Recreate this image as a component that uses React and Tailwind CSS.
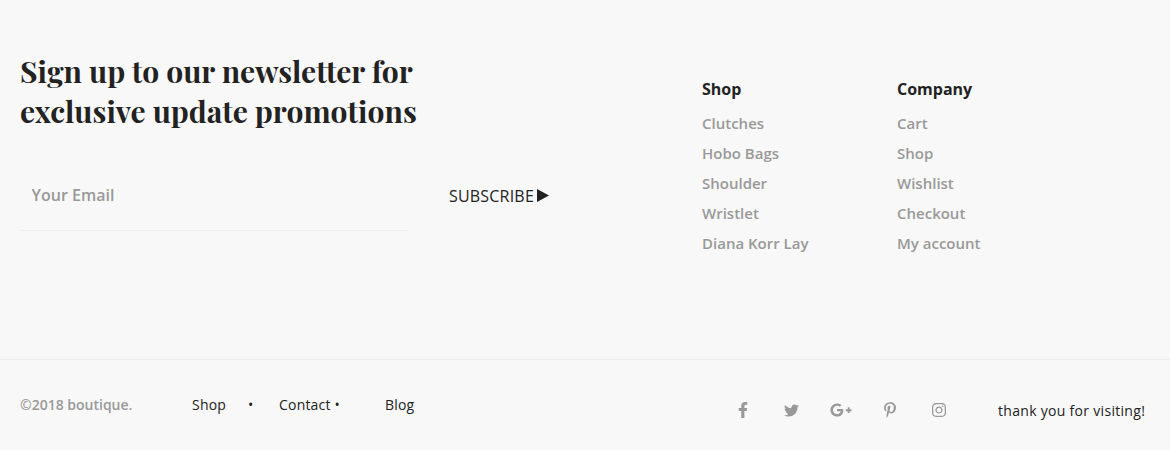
import { FaFacebookF, FaTwitter, FaGooglePlusG, FaPinterestP, FaInstagram } from 'react-icons/fa';

const columns = [
  { title: 'Shop', width: 'w-[195px]', links: ['Clutches', 'Hobo Bags', 'Shoulder', 'Wristlet', 'Diana Korr Lay'] },
  { title: 'Company', width: 'w-[195px]', links: ['Cart', 'Shop', 'Wishlist', 'Checkout', 'My account'] },
];

export default function App() {
  return (
    <footer className="flex h-[450px] w-[1170px] flex-col overflow-hidden bg-[#f8f8f8] font-['Open_Sans',sans-serif] text-[#222222]">
      <div className="flex h-[360px] border-b border-[#eeeeee] pl-5">
        <section className="w-[682px] pt-[51px]">
          <h2 className="font-['Playfair_Display','Liberation_Serif',serif] text-[30px] leading-10 font-bold whitespace-nowrap">
            <span className="block">Sign up to our newsletter for</span>
            <span className="block">exclusive update promotions</span>
          </h2>
          <form className="mt-7 flex">
            <input
              aria-label="Your Email"
              placeholder="Your Email"
              className="h-[72px] w-[388px] border-b border-[#eeeeee] px-[11.5px] text-base font-semibold outline-none placeholder:text-[#999999]"
            />
            <button type="button" className="ml-[41px] flex h-[72px] items-center pt-px text-base tracking-[0.2px] whitespace-nowrap">
              SUBSCRIBE
              <svg className="ml-[3px] h-[13px] w-3" viewBox="0 0 12 13" fill="currentColor" aria-hidden="true">
                <path d="M0 0L12 6.5L0 13Z" />
              </svg>
            </button>
          </form>
        </section>
        <nav className="flex pt-[77px]">
          {columns.map((column) => (
            <div key={column.title} className={column.width}>
              <h3 className="text-base leading-6 font-bold">{column.title}</h3>
              <ul className="mt-[7px] text-[15px] leading-[30px] font-semibold text-[#999999]">
                {column.links.map((link) => (
                  <li key={link}>{link}</li>
                ))}
              </ul>
            </div>
          ))}
        </nav>
      </div>
      <div className="flex pl-5 text-sm leading-5 whitespace-nowrap">
        <div className="flex w-[712px] pt-[35px] tracking-[0.2px]">
          <span className="w-[172px] font-semibold tracking-normal text-[#999999]">©2018 boutique.</span>
          <span className="w-14">Shop</span>
          <span className="w-[31px]">•</span>
          <span className="w-[106px]">Contact •</span>
          <span>Blog</span>
        </div>
        <div className="flex items-start pt-[40px] text-[#999999]">
          <div className="flex h-5 items-center">
            <span className="flex w-[22px] justify-center"><FaFacebookF size={16} /></span>
            <span className="ml-[27px] flex w-[22px] justify-center pr-px"><FaTwitter size={15} /></span>
            <span className="ml-[27px] flex w-[22px] justify-center"><FaGooglePlusG size={22} /></span>
            <span className="ml-[27px] flex w-[22px] justify-center"><FaPinterestP size={16} /></span>
            <span className="ml-[27px] flex w-[22px] justify-center"><FaInstagram size={16} /></span>
          </div>
          <span className="ml-12 pt-px tracking-[0.3px] text-[#222222]">thank you for visiting!</span>
        </div>
      </div>
    </footer>
  );
}
